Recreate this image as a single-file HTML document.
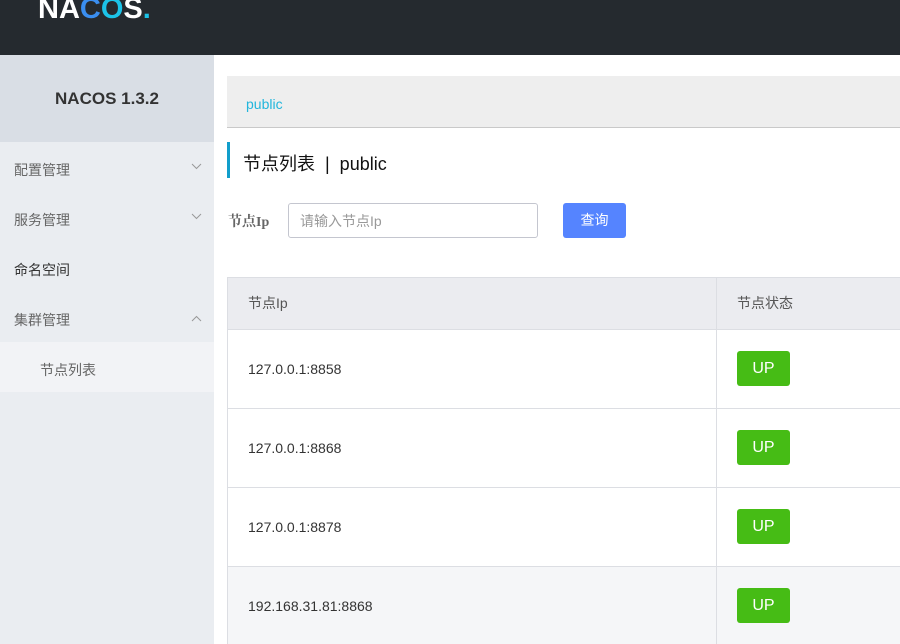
<!DOCTYPE html>
<html><head><meta charset="utf-8"><style>
*{margin:0;padding:0;box-sizing:border-box}
body{width:900px;height:644px;overflow:hidden;background:#fff;font-family:"Liberation Sans","Noto Sans CJK SC",sans-serif;position:relative}
.a{position:absolute}
.hdr{left:0;top:0;width:900px;height:55px;background:#252a2f}
.side{left:0;top:55px;width:214px;height:589px;background:#eaedf1}
.ver{left:0;top:55px;width:214px;height:87px;background:#d9dee5;text-align:center;line-height:87px;font-weight:bold;font-size:17px;color:#333}
.mi{left:14px;font-size:14px;color:#666;line-height:20px}
.chev{left:191px}
.cell{font-size:14px;color:#333;line-height:20px}
.up{left:737px;width:53px;height:35px;background:#46bc15;border-radius:3px;color:#fff;font-size:16px;text-align:center;line-height:35px}
.hl{height:1px;background:#dcdee3;left:227px;width:673px}
</style></head><body>
<div class="a hdr"></div>
<div class="a" style="left:38px;top:-7px;font-size:29px;font-weight:bold;color:#fff;letter-spacing:0px">NA<span style="color:#3a8ef0">C</span><span style="color:#1cc3e8">O</span>S<span style="color:#1cc3e8">.</span></div>
<div class="a side"></div>
<div class="a ver">NACOS 1.3.2</div>
<div class="a mi" style="top:160px">配置管理</div><svg class="a chev" style="top:163px" width="11" height="7"><path d="M1 1L5.5 5.5L10 1" fill="none" stroke="#999" stroke-width="1"/></svg>
<div class="a mi" style="top:210px">服务管理</div><svg class="a chev" style="top:213px" width="11" height="7"><path d="M1 1L5.5 5.5L10 1" fill="none" stroke="#999" stroke-width="1"/></svg>
<div class="a mi" style="top:260px;color:#333">命名空间</div>
<div class="a mi" style="top:310px">集群管理</div><svg class="a chev" style="top:315px" width="11" height="7"><path d="M1 6L5.5 1.5L10 6" fill="none" stroke="#999" stroke-width="1"/></svg>
<div class="a" style="left:0;top:342px;width:214px;height:50px;background:#f2f3f6"></div>
<div class="a mi" style="left:40px;top:360px">节点列表</div>

<div class="a" style="left:227px;top:76px;width:673px;height:52px;background:#eeeeee;border-bottom:1px solid #c9c9c9"></div>
<div class="a" style="left:246px;top:96px;font-size:14px;color:#22b6dc">public</div>
<div class="a" style="left:227px;top:142px;width:3px;height:36px;background:#129ecb"></div>
<div class="a" style="left:243px;top:152px;font-size:18px;line-height:24px;color:#111">节点列表 &nbsp;|&nbsp; public</div>
<div class="a" style="left:228px;top:211px;font-size:14px;font-weight:bold;color:#666;font-family:'Liberation Serif','Noto Serif CJK SC',serif">节点Ip</div>
<div class="a" style="left:288px;top:203px;width:250px;height:35px;border:1px solid #c4c6cf;border-radius:3px;font-size:14px;color:#999;padding-left:11px;line-height:35px">请输入节点Ip</div>
<div class="a" style="left:563px;top:203px;width:63px;height:35px;background:#5584ff;border-radius:3px;color:#fff;font-size:14px;text-align:center;line-height:35px">查询</div>

<div class="a" style="left:227px;top:277px;width:673px;height:53px;background:#ebecf0"></div>
<div class="a" style="left:227px;top:567px;width:673px;height:77px;background:#f5f6f8"></div>
<div class="a hl" style="top:277px"></div>
<div class="a hl" style="top:329px"></div>
<div class="a hl" style="top:408px"></div>
<div class="a hl" style="top:487px"></div>
<div class="a hl" style="top:566px"></div>
<div class="a" style="left:227px;top:277px;width:1px;height:367px;background:#dcdee3"></div>
<div class="a" style="left:716px;top:277px;width:1px;height:367px;background:#dcdee3"></div>
<div class="a cell" style="left:248px;top:293px;color:#555">节点Ip</div>
<div class="a cell" style="left:737px;top:293px;color:#555">节点状态</div>
<div class="a cell" style="left:248px;top:359px">127.0.0.1:8858</div>
<div class="a cell" style="left:248px;top:438px">127.0.0.1:8868</div>
<div class="a cell" style="left:248px;top:517px">127.0.0.1:8878</div>
<div class="a cell" style="left:248px;top:596px">192.168.31.81:8868</div>
<div class="a up" style="top:351px">UP</div>
<div class="a up" style="top:430px">UP</div>
<div class="a up" style="top:509px">UP</div>
<div class="a up" style="top:588px">UP</div>
</body></html>
